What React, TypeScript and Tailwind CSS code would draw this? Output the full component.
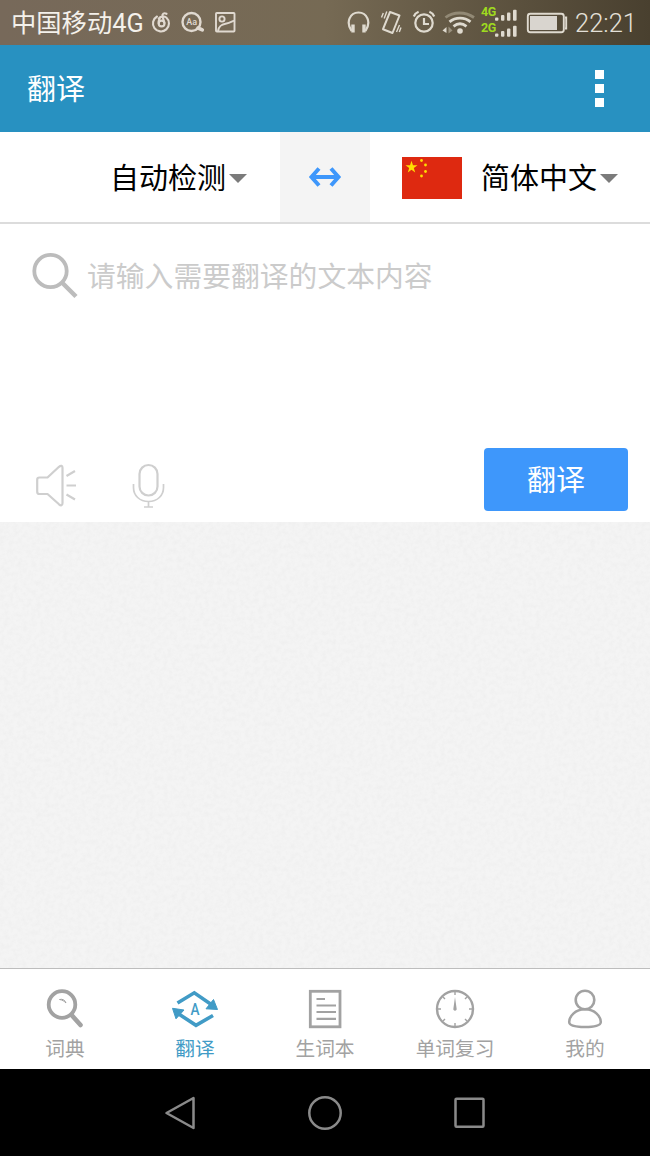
import clsx from "clsx";
import type { ReactNode } from "react";

function StatusBar() {
  return (
    <div className="flex h-[45px] shrink-0 items-center bg-linear-to-r from-[#77695a] via-[#766a54] to-[#49402f] pl-[11px] text-[#f4f1eb]">
      <span className="w-[134px] pt-[3px] text-[25.3px] leading-none whitespace-nowrap">
        中国移动4G
      </span>
      <svg className="ml-1 h-[45px] w-[26px]" viewBox="148 0 26 45" fill="none" stroke="#e0d9d0" strokeWidth="2.1" strokeLinecap="round">
        <path d="M156 16.500a8 8 0 1 0 9.300 1c-2.300-1.600-6-1.200-7.600 1.200" />
        <circle cx="160.600" cy="23.500" r="2.900" />
        <path d="M163.400 23l-1.900-6.800c-.5-2.500 1.500-3.700 4-2.400M157.700 23.500c-.2-2 0-3.500 1-5" />
      </svg>
      <svg className="ml-[5px] h-[45px] w-[26px]" viewBox="180 0 26 45" fill="none" stroke="#e0d9d0" strokeWidth="2.4" strokeLinecap="round">
        <circle cx="191.500" cy="22" r="9" />
        <path d="M198 28l4.300 1.800" strokeWidth="3.6" />
        <text x="186.200" y="25.300" fontSize="9" fontWeight="500" fill="#e0d9d0" stroke="none" fontFamily="Roboto">Aa</text>
      </svg>
      <svg className="ml-2 h-[45px] w-[23px]" viewBox="214 0 23 45" fill="none" stroke="#e0d9d0" strokeWidth="1.9">
        <rect x="216" y="13" width="18.500" height="18.500" rx=".8" />
        <circle cx="222" cy="19" r="2.600" />
        <path d="M218 31c1-5.500 4-6.500 7.500-7.200s6-2 9-3.300" />
      </svg>

      <svg className="ml-[109px] h-[45px] w-[26px]" viewBox="346 0 26 45" fill="none" stroke="#dfdacf" strokeWidth="2.2">
        <path d="M351.500 31c-6-9-1.500-18.500 7-18.500s13 9.500 7 18.500" />
        <path d="M353 24.500v8M364 24.500v8" strokeWidth="3.4" />
      </svg>
      <svg className="ml-2 h-[45px] w-[24px]" viewBox="380 0 24 45" fill="none" stroke="#dfdacf" strokeWidth="2" strokeLinejoin="round">
        <path d="M390 12l9.500 3.500-7 17.500-9.500-3.800z" />
        <path d="M381.500 17.500l1.800-4.500M384.200 18.500l2.600-7M396.500 32l3-7M399.300 32l1.700-4.500" strokeWidth="1.4" />
      </svg>
      <svg className="ml-2 h-[45px] w-[25px]" viewBox="412 0 25 45" fill="none" stroke="#dfdacf" strokeWidth="2.2">
        <circle cx="424" cy="23" r="8.700" />
        <path d="M424 18v6h5M413.800 16.500c.8-2 2.500-3.800 4.800-4.700M434.200 16.500c-.8-2-2.500-3.800-4.800-4.700" />
      </svg>
      <svg className="ml-1 h-[45px] w-[35px]" viewBox="441 0 35 45" fill="none" stroke="#dfdacf" strokeWidth="2.8">
        <path d="M445.500 17.500c8-6 20-6 28.500 0" stroke="#928975" />
        <path d="M449.500 21.800c6-5 15-5 21 0M453.500 26.300c4-3.200 9-3.200 13 0" />
        <circle cx="460" cy="31" r="2.800" fill="#dfdacf" stroke="none" />
        <path d="M446.500 27v6l-4-2.500z" fill="#dfdacf" stroke="none" />
        <path d="M448.500 26.500l4 4-4 3z" fill="#9a917e" stroke="none" />
      </svg>
      <div className="ml-[5px] flex h-8 w-[37px] flex-col">
        <SignalRow label="4G" />
        <SignalRow label="2G" />
      </div>
      <svg className="ml-2 h-[45px] w-[42px]" viewBox="526 0 42 45" fill="none" stroke="#dfdacf" strokeWidth="1.9">
        <rect x="527.800" y="13.800" width="36" height="18.500" rx="2.500" />
        <rect x="530" y="16" width="27" height="14" fill="#d9d5cf" stroke="none" />
        <path d="M565 17.500h1.200v11H565" />
      </svg>
      <span className="ml-[7px] pt-[3px] font-[Roboto] text-[25.5px] leading-none font-light text-[#e4e0d8]">
        22:21
      </span>
    </div>
  );
}

function SignalRow({ label }: { label: string }) {
  return (
    <div className="flex h-4 items-start">
      <span className="w-[14px] font-[Roboto] text-[12.5px] leading-[10px] font-bold tracking-[-0.5px] text-[#9fdb1f]">
        {label}
      </span>
      <svg className="h-4 w-[23px]" viewBox="0 0 23 16" fill="#dfdacf">
        <rect x="0" y="10.500" width="3.400" height="3.200" rx="1" />
        <rect x="6" y="8" width="3.400" height="5.700" rx="1" />
        <rect x="12" y="5.500" width="3.400" height="8.200" rx="1" />
        <rect x="18" y="2.800" width="3.600" height="10.900" rx="1" />
      </svg>
    </div>
  );
}

function Header() {
  return (
    <header className="flex h-[87px] shrink-0 items-center justify-between bg-[#2891c1] pr-[46px] pl-[27px]">
      <h1 className="pt-[3px] text-[29px] leading-none text-white">翻译</h1>
      <div className="flex flex-col gap-[5px]">
        <span className="size-[9px] bg-white" />
        <span className="size-[9px] bg-white" />
        <span className="size-[9px] bg-white" />
      </div>
    </header>
  );
}

function Caret() {
  return (
    <svg className="mt-[2px] ml-[3px] h-[9px] w-[18px]" viewBox="0 0 18 9" fill="#7b7b7b">
      <path d="M0 0h18L9 9z" />
    </svg>
  );
}

const smallStars = [
  { x: 19.5, y: 3.5 },
  { x: 23.5, y: 8 },
  { x: 23.5, y: 14.5 },
  { x: 19.5, y: 19 },
];

function Flag() {
  return (
    <svg className="mt-[2px] mr-[19px] h-[42px] w-[60px]" viewBox="0 0 60 42" fill="#ffde00">
      <rect width="60" height="42" fill="#de2910" />
      <path d="M9.500 3.800l1.500 4.400h4.500l-3.700 2.700 1.400 4.500-3.700-2.700-3.700 2.700 1.400-4.500L3.500 8.200H8z" />
      {smallStars.map((star) => (
        <circle key={star.x + "-" + star.y} cx={star.x} cy={star.y} r="1.4" />
      ))}
    </svg>
  );
}

function LanguageBar() {
  return (
    <div className="flex h-[92px] shrink-0 border-b-2 border-[#dcdcdc] bg-white text-[29px] leading-none text-black">
      <button className="flex w-[280px] items-center justify-end pr-[33px]">
        <span className="pt-[5px]">自动检测</span>
        <Caret />
      </button>
      <button className="flex w-[90px] items-center justify-center bg-[#f4f4f4]">
        <svg className="h-[20px] w-[34px]" viewBox="0 0 34 20" fill="none" stroke="#3e97fb" strokeWidth="4">
          <path d="M4 10h26M11 1.500L3.500 10l7.500 8.500M23 1.500l7.500 8.500-7.500 8.500" />
        </svg>
      </button>
      <button className="flex flex-1 items-center pl-[32px]">
        <Flag />
        <span className="pt-[5px]">简体中文</span>
        <Caret />
      </button>
    </div>
  );
}

function TranslateInput() {
  return (
    <section className="flex h-[298px] shrink-0 flex-col justify-between bg-white pt-[27px] pr-[22px] pb-[11px] pl-[32px]">
      <div className="flex items-center">
        <svg className="h-[48px] w-[47px]" viewBox="0 0 47 48" fill="none" stroke="#bcbcbc" strokeWidth="3.8">
          <circle cx="18.500" cy="20" r="16.200" />
          <path d="M30.500 32L44 45.500" strokeWidth="4.5" />
        </svg>
        <p className="ml-2 pt-[5px] text-[28.8px] leading-none text-[#cbcbcb]">
          请输入需要翻译的文本内容
        </p>
      </div>
      <div className="flex items-end">
        <svg className="mb-[3px] ml-[3px] h-[44px] w-[43px]" viewBox="35 464 43 44" fill="none" stroke="#cfcfcf" strokeWidth="2.2" strokeLinejoin="round">
          <path d="M39.500 477.500h8L59 466.800c2-1.700 3.500-1 3.500 1V503c0 2.500-1.500 3-3.500 1.300L47.500 494h-8c-1.500 0-2.300-.8-2.300-2.300v-12c0-1.400.8-2.200 2.300-2.200z" />
          <path d="M66.500 476l8.500-5M66.500 485.500H76M66.500 494.500l8.500 5" />
        </svg>
        <svg className="mb-[2px] ml-[54px] h-[46px] w-[34px]" viewBox="132 463 34 46" fill="none" stroke="#cfcfcf" strokeWidth="2.2">
          <rect x="139.500" y="465" width="18" height="30.500" rx="9" />
          <path d="M133.500 484v3.500c0 8 6 14 15 14s15-6 15-14V484M148.500 501.500v5.500M144 507h9" strokeWidth="1.7" />
        </svg>
        <button className="ml-auto h-[63px] w-[144px] rounded-[4px] bg-[#3e97fb] pt-[4px] text-[29px] leading-none text-white">
          翻译
        </button>
      </div>
    </section>
  );
}

// empty result area with the paper grain
function ResultArea() {
  return (
    <div className="h-[446px] shrink-0 bg-[#f4f4f4]">
      <svg className="h-full w-full opacity-[0.045]">
        <filter id="grain">
          <feTurbulence type="fractalNoise" baseFrequency="0.22" numOctaves="3" />
          <feColorMatrix values="0 0 0 0 0.3  0 0 0 0 0.3  0 0 0 0 0.3  2 0 0 0 -0.7" />
        </filter>
        <rect width="100%" height="100%" filter="url(#grain)" />
      </svg>
    </div>
  );
}

const tabs: { label: string; icon: ReactNode; active?: boolean }[] = [
  {
    label: "词典",
    icon: (
      <>
        <circle cx="21" cy="16.500" r="13.300" strokeWidth="3.8" />
        <path d="M31 27.500l8.500 9.500" strokeWidth="4.6" strokeLinecap="round" />
        <path d="M18.500 11.500c3-.8 5.500.5 6.500 3.500-2-2-3.500-3-6.500-3.500z" strokeWidth="1" />
      </>
    ),
  },
  {
    label: "翻译",
    active: true,
    icon: (
      <>
        <path d="M6.500 15L23.300 4.800 41 17M42 27.500L25 37.300 7 25.500" strokeWidth="3.6" />
        <path d="M42.500 11.500l4 10-11.500-.7zM1.500 20.300l11.500 1.700-8 8.800z" fill="currentColor" stroke="currentColor" strokeWidth="1" strokeLinejoin="round" />
        <text x="19.500" y="27" fontSize="16" fontWeight="500" fill="currentColor" stroke="none" fontFamily="Roboto" textLength="9" lengthAdjust="spacingAndGlyphs">A</text>
      </>
    ),
  },
  {
    label: "生词本",
    icon: (
      <>
        <rect x="9.300" y="3.300" width="29.700" height="35.500" strokeWidth="2.8" />
        <path d="M15.500 11h8.500M15.500 17.500h19.500M15.500 24h19.500M15.500 30.800h19.500" strokeWidth="2.2" />
      </>
    ),
  },
  {
    label: "单词复习",
    icon: (
      <>
        <circle cx="24" cy="21" r="18" strokeWidth="2.4" />
        <path d="M24 4v3M24 35v3M7 21h3M38 21h3M12 9l2 2M36 9l-2 2M12 33l2-2M36 33l-2-2" strokeWidth="1.4" />
        <path d="M24 9l1.600 11.500a1.700 1.700 0 1 1-3.200 0z" fill="currentColor" stroke="none" />
      </>
    ),
  },
  {
    label: "我的",
    icon: (
      <>
        <circle cx="24" cy="12" r="9.300" strokeWidth="2.6" />
        <path d="M24 21.300C14 21.300 8.200 28.500 8.200 34c0 3.500 6.500 5 15.800 5s15.800-1.500 15.800-5C39.800 28.500 34 21.300 24 21.300z" strokeWidth="2.5" />
      </>
    ),
  },
];

function TabBar() {
  return (
    <nav className="grid h-[101px] shrink-0 grid-cols-5 border-t border-[#bdbdbd] bg-white">
      {tabs.map((tab) => (
        <button
          key={tab.label}
          className={clsx(
            "flex flex-col items-center justify-start pt-[19px]",
            tab.active ? "text-[#419bc6]" : "text-[#a2a2a2]",
          )}
        >
          <svg className="h-[42px] w-[48px]" viewBox="0 0 48 42" fill="none" stroke="currentColor">
            {tab.icon}
          </svg>
          <span className="mt-[10px] text-[19.7px] leading-[20px]">{tab.label}</span>
        </button>
      ))}
    </nav>
  );
}

function SystemNav() {
  return (
    <div className="flex h-[87px] shrink-0 items-center justify-center gap-[109px] bg-black">
      <svg className="size-9" viewBox="0 0 36 36" fill="none" stroke="#8a8a8a" strokeWidth="2.5" strokeLinejoin="round">
        <path d="M31.500 3v30L4.500 18z" />
      </svg>
      <svg className="size-9" viewBox="0 0 36 36" fill="none" stroke="#8a8a8a" strokeWidth="2.5">
        <circle cx="18" cy="18" r="15.700" />
      </svg>
      <svg className="size-9" viewBox="0 0 36 36" fill="none" stroke="#8a8a8a" strokeWidth="2.5">
        <rect x="3.500" y="3.800" width="28" height="28" rx="1" />
      </svg>
    </div>
  );
}

export default function App() {
  return (
    <div className="flex h-[1156px] w-[650px] flex-col overflow-hidden bg-white font-[Roboto,'Noto_Sans_CJK_SC',sans-serif]">
      <StatusBar />
      <Header />
      <LanguageBar />
      <TranslateInput />
      <ResultArea />
      <TabBar />
      <SystemNav />
    </div>
  );
}
